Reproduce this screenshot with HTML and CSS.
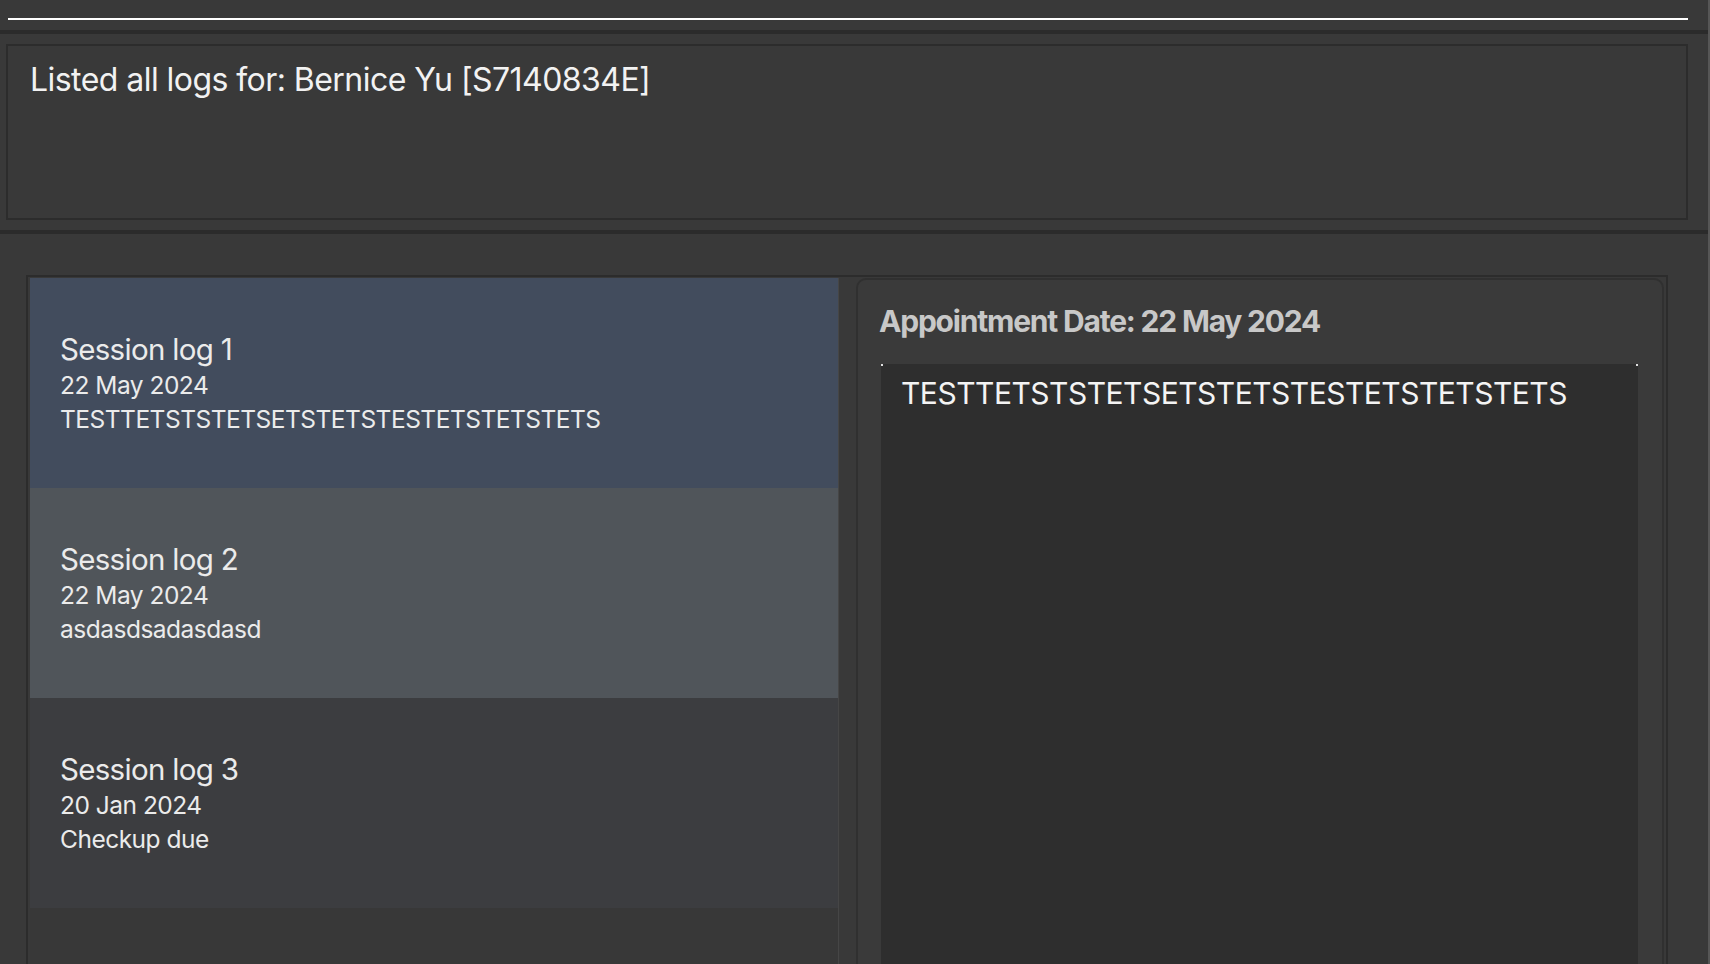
FILE: index.html
```html
<!DOCTYPE html>
<html>
<head>
<meta charset="utf-8">
<link rel="stylesheet" href="styles.css">
</head>
<body>
<div class="app">
  <div class="main">
    <div class="topbar"><div class="cmdline"></div></div>
    <div class="sep"></div>
    <div class="result">
      <div class="result-text">Listed all logs for: Bernice Yu [S7140834E]</div>
    </div>
    <div class="sep sep2"></div>
    <div class="panel">
      <div class="list">
        <div class="cell cell-selected">
          <div class="cell-title">Session log 1</div>
          <div class="cell-line">22 May 2024</div>
          <div class="cell-line">TESTTETSTSTETSETSTETSTESTETSTETSTETS</div>
        </div>
        <div class="cell cell-hover">
          <div class="cell-title">Session log 2</div>
          <div class="cell-line">22 May 2024</div>
          <div class="cell-line">asdasdsadasdasd</div>
        </div>
        <div class="cell cell-plain">
          <div class="cell-title">Session log 3</div>
          <div class="cell-line">20 Jan 2024</div>
          <div class="cell-line">Checkup due</div>
        </div>
      </div>
      <div class="card">
        <div class="card-title">Appointment Date: 22 May 2024</div>
        <div class="notes">
          <div class="notes-text">TESTTETSTSTETSETSTETSTESTETSTETSTETS</div>
        </div>
      </div>
    </div>
  </div>
  <div class="edge"></div>
</div>
</body>
</html>
```

FILE: styles.css
```css
html, body {
  margin: 0;
  padding: 0;
}
body {
  width: 1710px;
  height: 964px;
  overflow: hidden;
  background: #393939;
  font-family: Inter, "Liberation Sans", sans-serif;
  color: #e8e8e8;
}
.app {
  display: flex;
  height: 964px;
}
.main {
  width: 1708px;
  display: flex;
  flex-direction: column;
}
.main > * {
  flex-shrink: 0;
}
.edge {
  width: 2px;
  background: #565656;
}
.topbar {
  height: 30px;
  padding-top: 18px;
  box-sizing: border-box;
}
.cmdline {
  margin-left: 8px;
  width: 1680px;
  height: 2px;
  background: #ffffff;
}
.sep {
  height: 4px;
  background: #2b2b2b;
}
.result {
  margin: 10px 0 0 6px;
  width: 1682px;
  height: 176px;
  box-sizing: border-box;
  border: 2px solid #2c2c2c;
  padding: 14px 0 0 22px;
}
.result-text {
  font-size: 32px;
  line-height: 39px;
  color: #f2f2f2;
  letter-spacing: -0.55px;
}
.sep2 {
  margin-top: 10px;
}
.panel {
  margin: 41px 0 0 26px;
  width: 1642px;
  height: 700px;
  box-sizing: border-box;
  border: 2px solid #2c2c2c;
  border-bottom: none;
  padding: 1px 2px 0 2px;
  display: flex;
  gap: 17px;
}
.list {
  width: 809px;
  background: #383838;
  border-right: 1px solid #464646;
  box-sizing: border-box;
  display: flex;
  flex-direction: column;
}
.cell {
  height: 210px;
  padding-left: 30px;
  display: flex;
  flex-direction: column;
  justify-content: center;
  flex-shrink: 0;
}
.cell-selected { background: #424c5d; }
.cell-hover { background: #50555a; }
.cell-plain { background: #3c3d40; }
.cell-title {
  font-size: 29.5px;
  line-height: 38px;
  letter-spacing: -0.7px;
  color: #ebebeb;
}
.cell-line {
  font-size: 24.5px;
  line-height: 34px;
  letter-spacing: -0.5px;
  color: #ebebeb;
}
.card {
  width: 808px;
  height: 720px;
  box-sizing: border-box;
  border: 2px solid #303030;
  border-radius: 10px;
  background: #3a3a3a;
  padding: 23px 24px 0 21px;
  display: flex;
  flex-direction: column;
}
.card-title {
  font-size: 30px;
  font-weight: 700;
  line-height: 36px;
  color: #c8c8c8;
  letter-spacing: -1.2px;
}
.notes {
  margin-top: 25px;
  margin-left: 2px;
  flex: 1;
  background: #2e2e2e;
  padding: 11px 0 0 20px;
  position: relative;
}
.notes::before, .notes::after {
  content: "";
  position: absolute;
  top: 0;
  width: 2px;
  height: 2px;
  background: #e0e0e0;
}
.notes::before { left: 0; }
.notes::after { right: 0; }
.notes-text {
  font-size: 30px;
  line-height: 36px;
  color: #f4f4f4;
  letter-spacing: -0.5px;
}
```
